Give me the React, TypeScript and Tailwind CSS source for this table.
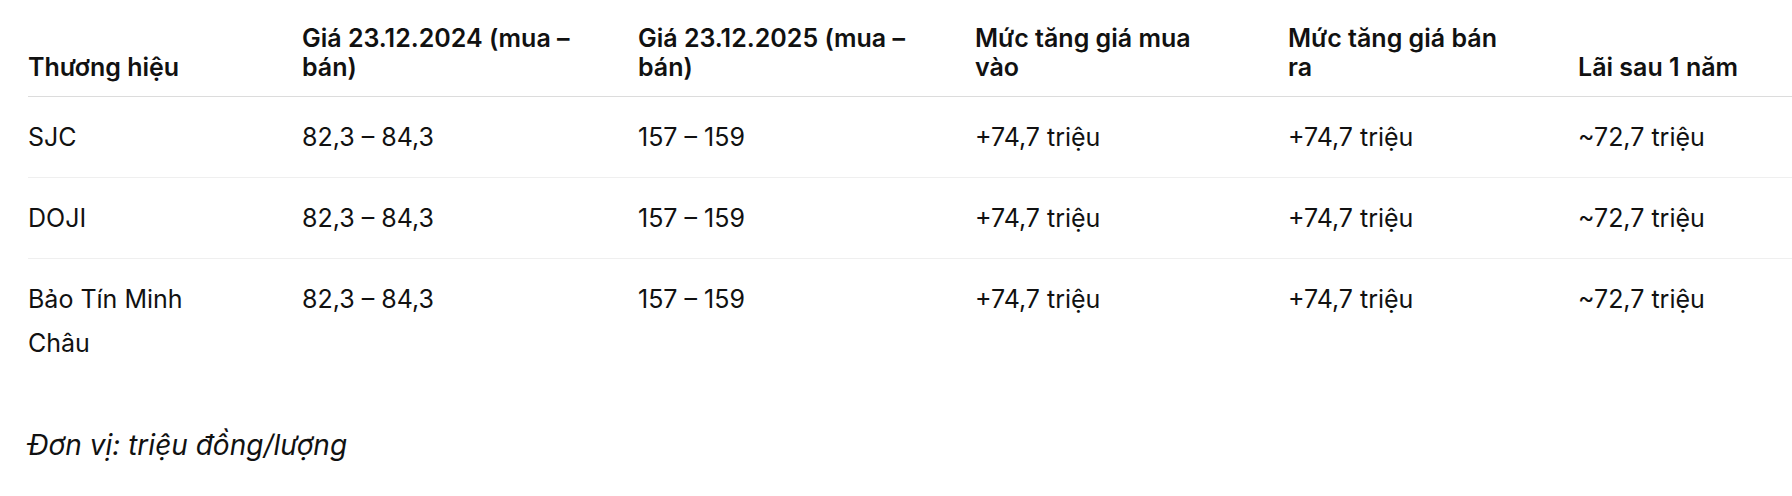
const rows = [
  { brand: ['SJC'], p2024: '82,3 – 84,3', p2025: '157 – 159', buy: '+74,7 triệu', sell: '+74,7 triệu', profit: '~72,7 triệu' },
  { brand: ['DOJI'], p2024: '82,3 – 84,3', p2025: '157 – 159', buy: '+74,7 triệu', sell: '+74,7 triệu', profit: '~72,7 triệu' },
  { brand: ['Bảo Tín Minh', 'Châu'], p2024: '82,3 – 84,3', p2025: '157 – 159', buy: '+74,7 triệu', sell: '+74,7 triệu', profit: '~72,7 triệu' },
];

const headers = [
  ['Thương hiệu'],
  ['Giá 23.12.2024 (mua –', 'bán)'],
  ['Giá 23.12.2025 (mua –', 'bán)'],
  ['Mức tăng giá mua', 'vào'],
  ['Mức tăng giá bán', 'ra'],
  ['Lãi sau 1 năm'],
];

export default function App() {
  return (
    <div className="bg-white text-[#111] pl-[28px] pt-[10px] font-['Inter',sans-serif]">
      <table className="table-fixed w-[1764px] border-collapse">
        <colgroup>
          <col className="w-[274px]" />
          <col className="w-[336px]" />
          <col className="w-[337px]" />
          <col className="w-[313px]" />
          <col className="w-[290px]" />
          <col />
        </colgroup>
        <thead>
          <tr className="border-b border-[#dcdcdc]">
            {headers.map((h, i) => (
              <th key={i} className="text-left align-bottom font-semibold text-[25px] leading-[29px] pt-[14px] pb-[14px] pr-6">
                {h.map((line, j) => (
                  <div key={j}>{line}</div>
                ))}
              </th>
            ))}
          </tr>
        </thead>
        <tbody>
          {rows.map((r, i) => (
            <tr key={i} className={i < rows.length - 1 ? 'border-b border-[#efefef]' : ''}>
              <td className="align-top text-[25px] leading-[44px] py-[18px] pr-6">
                {r.brand.map((line, j) => (
                  <div key={j}>{line}</div>
                ))}
              </td>
              <td className="align-top text-[25px] leading-[44px] py-[18px] pr-6">{r.p2024}</td>
              <td className="align-top text-[25px] leading-[44px] py-[18px] pr-6">{r.p2025}</td>
              <td className="align-top text-[25px] leading-[44px] py-[18px] pr-6">{r.buy}</td>
              <td className="align-top text-[25px] leading-[44px] py-[18px] pr-6">{r.sell}</td>
              <td className="align-top text-[25px] leading-[44px] py-[18px] pr-6">{r.profit}</td>
            </tr>
          ))}
        </tbody>
      </table>
      <p className="italic text-[28px] leading-[44px] mt-[40px]">Đơn vị: triệu đồng/lượng</p>
    </div>
  );
}
